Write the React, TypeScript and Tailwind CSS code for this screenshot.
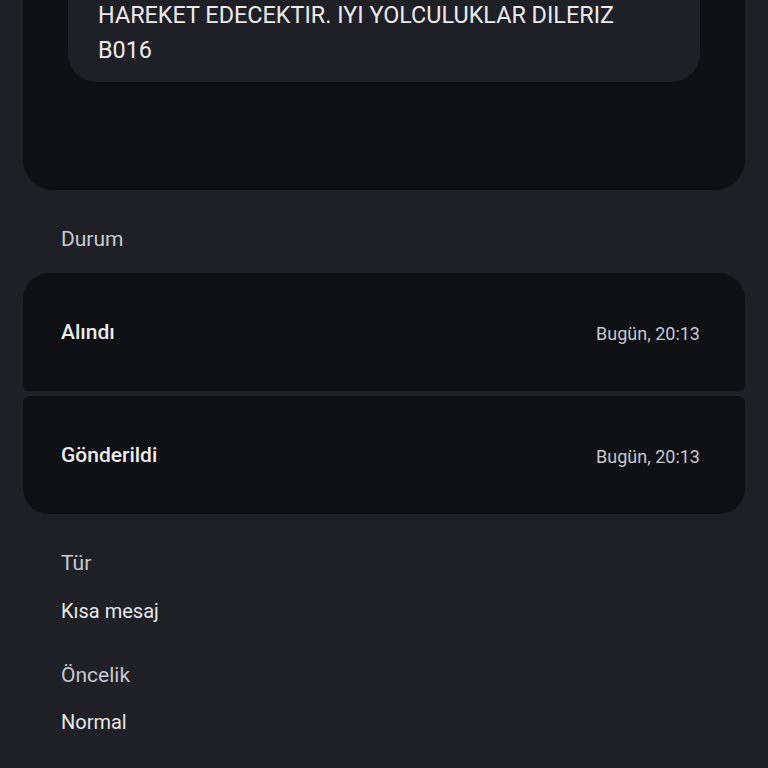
import React from 'react';

const font = { fontFamily: 'Roboto, "Noto Sans", sans-serif' };

function StatusRow({ label, time, shape }: { label: string; time: string; shape: string }) {
  return (
    <div className={`flex h-[118px] items-center justify-between bg-[#0f1014] pl-[38px] pr-[45px] pt-[2px] ${shape}`}>
      <span className="text-[21px] font-medium text-[#ececf0]">{label}</span>
      <span className="text-[18px] text-[#c6c7ce]">{time}</span>
    </div>
  );
}

export default function App() {
  return (
    <div className="h-[768px] w-[768px] overflow-hidden bg-[#1f2025]" style={font}>
      <div className="-mt-[40px] mx-[23px] rounded-b-[30px] bg-[#0f1014] px-[45px] pb-[108px]">
        <div className="rounded-b-[28px] bg-[#1f2025] px-[30px] pt-[38px] pb-[14px] text-[23.4px] leading-[35px] text-[#ebebef]">
          <p>HAREKET EDECEKTIR. IYI YOLCULUKLAR DILERIZ</p>
          <p>B016</p>
        </div>
      </div>

      <div className="mt-[36px] px-[61px] text-[21px] leading-[26px] text-[#c8c9d2]">Durum</div>

      <div className="mx-[23px] mt-[21px] flex flex-col gap-[5px]">
        <StatusRow label="Alındı" time="Bugün, 20:13" shape="rounded-t-[26px] rounded-b-[6px]" />
        <StatusRow label="Gönderildi" time="Bugün, 20:13" shape="rounded-b-[26px] rounded-t-[6px]" />
      </div>

      <div className="px-[61px] pt-[36px]">
        <div className="text-[21px] leading-[26px] text-[#c8c9d2]">Tür</div>
        <div className="mt-[22px] text-[20px] leading-[26px] text-[#e6e6ea]">Kısa mesaj</div>
        <div className="mt-[38px] text-[21px] leading-[26px] text-[#c8c9d2]">Öncelik</div>
        <div className="mt-[21px] text-[20px] leading-[26px] text-[#e6e6ea]">Normal</div>
      </div>
    </div>
  );
}
